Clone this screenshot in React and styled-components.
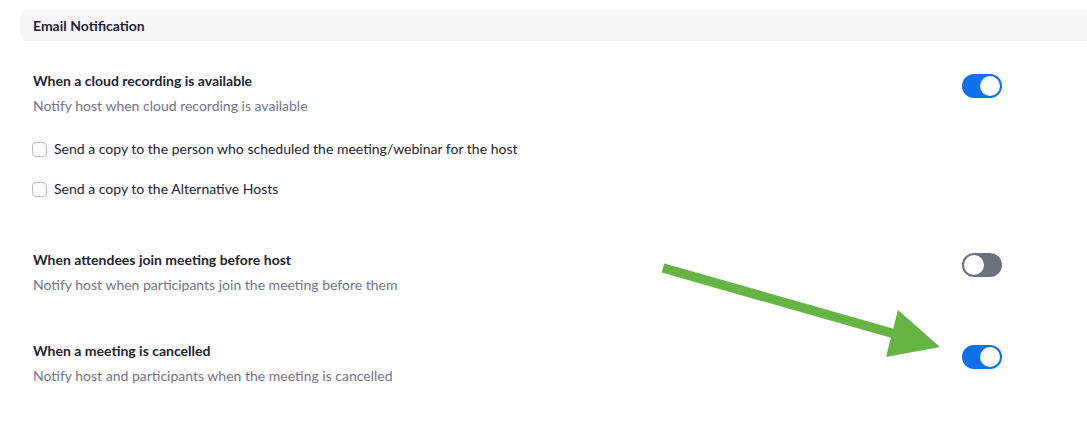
import React from "react";
import styled, { createGlobalStyle } from "styled-components";

const GlobalStyle = createGlobalStyle`
  body {
    margin: 0;
    background: #ffffff;
    font-family: Lato, "Open Sans", sans-serif;
    color: #232333;
  }
`;

const Page = styled.div`
  position: relative;
  width: 1087px;
  height: 425px;
  overflow: hidden;
  padding: 10px 0 0 20px;
  box-sizing: border-box;
`;

const SectionHeader = styled.div`
  height: 31px;
  display: flex;
  align-items: center;
  padding-left: 13px;
  background: #f7f7fa;
  border-radius: 8px 0 0 8px;
  font-size: 14px;
  font-weight: 700;
  color: #232333;
`;

const SettingRow = styled.div`
  display: flex;
  justify-content: space-between;
  align-items: flex-start;
  margin-top: ${(p) => p.$gap}px;
  padding-left: 13px;
  width: 982px;
  box-sizing: border-box;
`;

const SettingText = styled.div`
  display: flex;
  flex-direction: column;
`;

const Title = styled.div`
  font-size: 14px;
  font-weight: 700;
  line-height: 20px;
  color: #232333;
`;

const Subtitle = styled.div`
  margin-top: 5px;
  font-size: 14px;
  line-height: 20px;
  color: #747487;
`;

const CheckList = styled.div`
  display: flex;
  flex-direction: column;
  gap: 20px;
  margin-top: 22px;
  margin-bottom: 2px;
  margin-left: -1px;
`;

const CheckRow = styled.label`
  display: flex;
  align-items: center;
  gap: 7px;
  height: 20px;
  font-size: 14px;
  color: #232333;
`;

const CheckBox = styled.span`
  width: 15px;
  height: 15px;
  box-sizing: border-box;
  border: 1px solid #b9b9c8;
  border-radius: 4px;
  background: #fff;
  margin-top: 2px;
`;

const Track = styled.div`
  position: relative;
  width: 40px;
  height: 24px;
  margin-top: ${(p) => p.$offset}px;
  border-radius: 12px;
  background: ${(p) => (p.$on ? "#0e71eb" : "#6e7080")};
  flex-shrink: 0;
`;

const Knob = styled.div`
  position: absolute;
  top: 2px;
  left: ${(p) => (p.$on ? "18px" : "2px")};
  width: 20px;
  height: 20px;
  border-radius: 50%;
  background: #fff;
`;

const Arrow = styled.svg`
  position: absolute;
  left: 0;
  top: 0;
  pointer-events: none;
`;

const Toggle = ({ on, offset }) => (
  <Track $on={on} $offset={offset}>
    <Knob $on={on} />
  </Track>
);

export default function App() {
  return (
    <>
      <GlobalStyle />
      <Page>
        <SectionHeader>Email Notification</SectionHeader>

        <SettingRow $gap={30}>
          <SettingText>
            <Title>When a cloud recording is available</Title>
            <Subtitle>Notify host when cloud recording is available</Subtitle>
            <CheckList>
              <CheckRow>
                <CheckBox />
                Send a copy to the person who scheduled the meeting/webinar for the host
              </CheckRow>
              <CheckRow>
                <CheckBox />
                Send a copy to the Alternative Hosts
              </CheckRow>
            </CheckList>
          </SettingText>
          <Toggle on offset={3} />
        </SettingRow>

        <SettingRow $gap={50}>
          <SettingText>
            <Title>When attendees join meeting before host</Title>
            <Subtitle>Notify host when participants join the meeting before them</Subtitle>
          </SettingText>
          <Toggle offset={3} />
        </SettingRow>

        <SettingRow $gap={46}>
          <SettingText>
            <Title>When a meeting is cancelled</Title>
            <Subtitle>Notify host and participants when the meeting is cancelled</Subtitle>
          </SettingText>
          <Toggle on offset={4} />
        </SettingRow>

        <Arrow width="1087" height="425" viewBox="0 0 1087 425">
          <line x1="663" y1="268" x2="895" y2="334" stroke="#66b346" strokeWidth="9.5" />
          <polygon points="898,310 940,347 886,357" fill="#66b346" />
        </Arrow>
      </Page>
    </>
  );
}
